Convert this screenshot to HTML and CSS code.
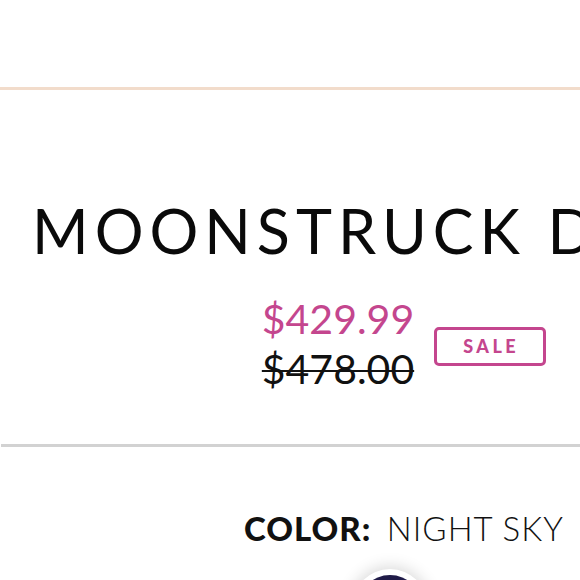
FILE: index.html
```html
<!DOCTYPE html>
<html lang="en">
<head>
<meta charset="utf-8">
<title>Moonstruck Dress</title>
<link rel="stylesheet" href="styles.css">
</head>
<body>
<div class="page">
  <header class="topbar"></header>
  <section class="product">
    <h1 class="title">MOONSTRUCK DRESS</h1>
    <div class="price-row">
      <div class="prices">
        <span class="price-now">$429.99</span>
        <span class="price-was">$478.00</span>
      </div>
      <span class="badge">SALE</span>
    </div>
  </section>
  <hr class="divider">
  <section class="options">
    <div class="color-label"><strong>COLOR:</strong> <span class="color-name">NIGHT SKY</span></div>
    <div class="swatches">
      <span class="swatch"></span>
    </div>
  </section>
</div>
</body>
</html>
```
FILE: styles.css
```css
html, body {
  margin: 0;
  padding: 0;
  background: #ffffff;
  overflow: hidden;
}
body {
  width: 580px;
  height: 580px;
  font-family: "Lato", "DejaVu Sans", sans-serif;
  color: #111111;
}
.page {
  width: 808px;
}
.topbar {
  height: 87px;
  border-bottom: 3px solid #f2dccb;
}
.product {
  padding-top: 110px;
}
.title {
  margin: 0;
  padding-left: 32px;
  font-size: 61px;
  font-weight: 400;
  line-height: 1;
  letter-spacing: 6px;
  white-space: nowrap;
  color: #0a0a0a;
}
.price-row {
  display: flex;
  justify-content: center;
  align-items: center;
  gap: 20px;
  margin-top: 33px;
}
.prices {
  display: flex;
  flex-direction: column;
  align-items: center;
  line-height: 1.22;
}
.price-now {
  font-size: 41px;
  color: #c4468e;
}
.price-was {
  font-size: 41px;
  color: #111111;
  text-decoration: line-through;
  text-decoration-thickness: 2px;
}
.badge {
  border: 3px solid #c4468e;
  border-radius: 5px;
  width: 104px;
  height: 33px;
  box-sizing: content-box;
  display: flex;
  align-items: center;
  justify-content: center;
  color: #c4468e;
  font-weight: 900;
  font-size: 18px;
  letter-spacing: 3.5px;
  padding-left: 2px;
  margin-top: 4px;
}
.divider {
  margin: 50px 0 0 1px;
  border: 0;
  border-top: 3px solid #d2d2d2;
}
.options {
  padding-top: 65px;
  text-align: center;
}
.color-label {
  font-size: 33px;
  line-height: 1;
  letter-spacing: 1px;
}
.color-label strong {
  font-weight: 900;
}
.color-name {
  font-weight: 300;
  margin-left: 6px;
}
.swatches {
  display: flex;
  justify-content: center;
  margin-top: 30px;
  padding-right: 28px;
}
.swatch {
  width: 64px;
  height: 64px;
  border-radius: 50%;
  background: #1f1b48;
  box-shadow: 0 0 0 6px #ffffff, 0 0 16px 8px rgba(0,0,0,0.16);
}
```
